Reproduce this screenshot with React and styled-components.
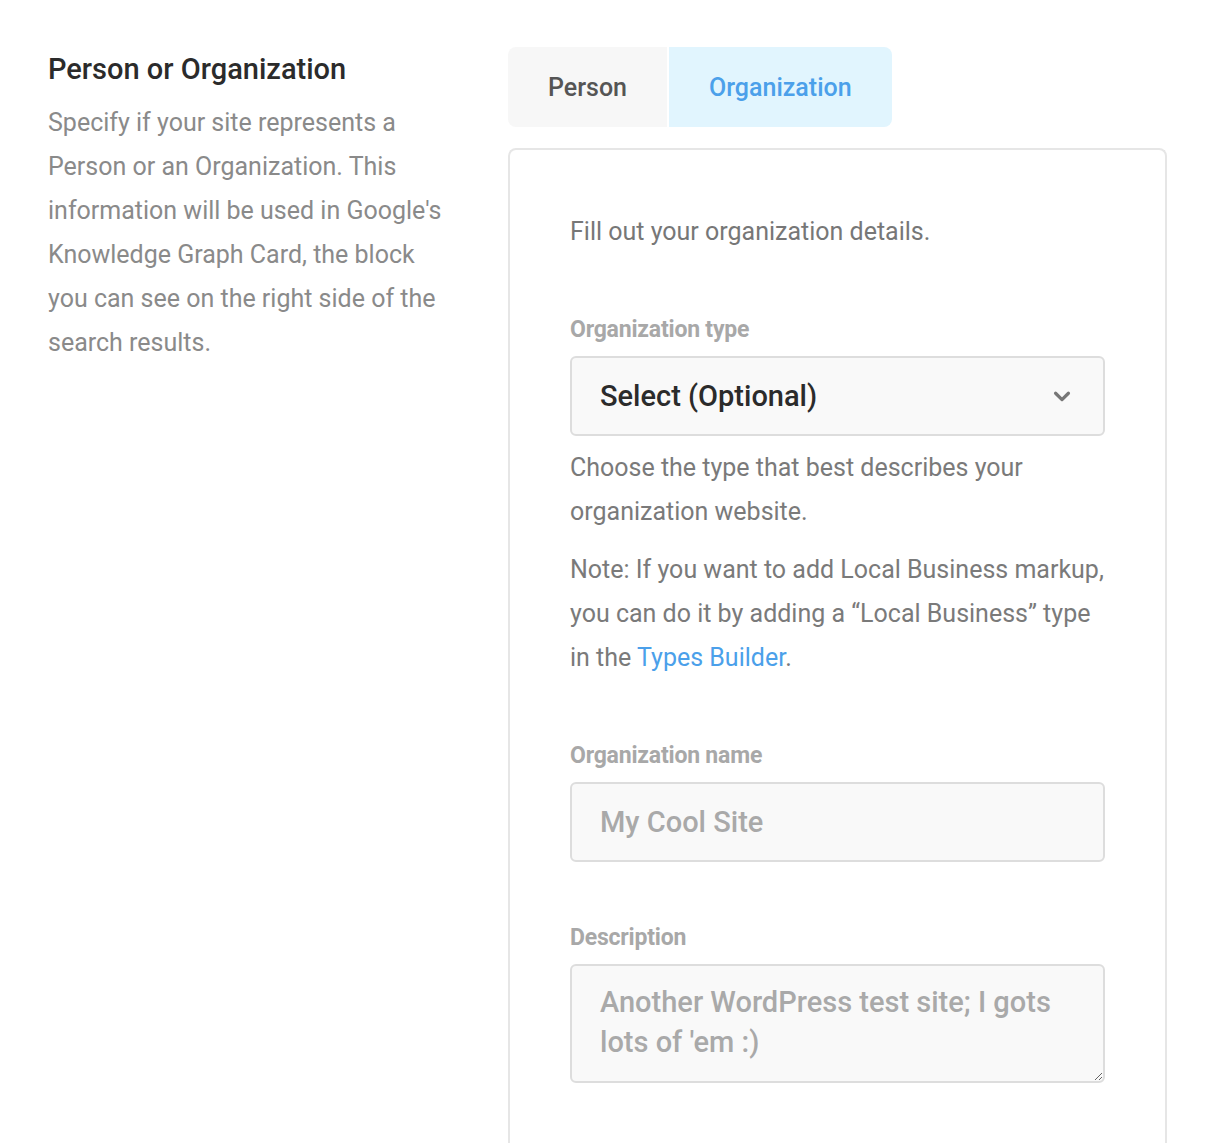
import React, { useState } from "react";
import styled, { createGlobalStyle } from "styled-components";

const GlobalStyle = createGlobalStyle`
  html, body {
    margin: 0;
    padding: 0;
    background: #ffffff;
    font-family: Roboto, "Liberation Sans", Arial, sans-serif;
  }
  * {
    box-sizing: border-box;
  }
`;

const Page = styled.div`
  display: flex;
  align-items: flex-start;
  padding: 47px 53px 0 48px;
  gap: 60px;
  height: 1143px;
  overflow: hidden;
`;

const Intro = styled.div`
  width: 400px;
  flex-shrink: 0;
`;

const Heading = styled.h2`
  margin: 0;
  padding-top: 5px;
  font-size: 29px;
  line-height: 34px;
  font-weight: 500;
  color: #2b2b2b;
`;

const IntroText = styled.p`
  margin: 15px 0 0;
  font-size: 25px;
  line-height: 44px;
  color: #8a8a8a;
`;

const Main = styled.div`
  flex: 1;
  display: flex;
  flex-direction: column;
  gap: 21px;
`;

const Tabs = styled.div`
  display: flex;
  gap: 2px;
`;

const Tab = styled.button`
  border: none;
  height: 80px;
  padding: 0 40px;
  font-family: inherit;
  font-size: 25px;
  font-weight: 500;
  cursor: pointer;
  background: ${(p) => (p.$active ? "#e1f5fe" : "#f7f7f7")};
  color: ${(p) => (p.$active ? "#4ba0ea" : "#555555")};
  border-radius: ${(p) => (p.$first ? "8px 0 0 8px" : "0 8px 8px 0")};
`;

const Card = styled.div`
  border: 2px solid #e6e6e6;
  border-bottom: none;
  border-radius: 8px 8px 0 0;
  padding: 60px 60px 80px 60px;
  min-height: 1000px;
`;

const Lead = styled.p`
  margin: 0;
  font-size: 25px;
  line-height: 44px;
  color: #777777;
`;

const Field = styled.div`
  margin-top: ${(p) => p.$top}px;
`;

const Label = styled.label`
  display: block;
  font-size: 23px;
  font-weight: 700;
  line-height: 30px;
  color: #a8a8a8;
  margin-bottom: 11px;
  letter-spacing: -0.2px;
`;

const SelectBox = styled.div`
  display: flex;
  align-items: center;
  justify-content: space-between;
  height: 80px;
  padding: 0 30px 0 28px;
  background: #f9f9f9;
  border: 2px solid #dddddd;
  border-radius: 6px;
  font-size: 29px;
  font-weight: 500;
  color: #2b2b2b;
`;

const Chevron = styled.svg`
  width: 22px;
  height: 22px;
  color: #777;
`;

const Input = styled.input`
  display: block;
  width: 100%;
  height: 80px;
  padding: 0 28px;
  background: #f9f9f9;
  border: 2px solid #dddddd;
  border-radius: 6px;
  font-family: inherit;
  font-size: 29px;
  font-weight: 500;
  color: #333;
  outline: none;
  &::placeholder {
    color: #a9a9a9;
  }
`;

const TextArea = styled.textarea`
  display: block;
  width: 100%;
  height: 119px;
  padding: 16px 28px;
  background: #f9f9f9;
  border: 2px solid #dddddd;
  border-radius: 6px;
  font-family: inherit;
  font-size: 29px;
  font-weight: 500;
  line-height: 40px;
  color: #333;
  outline: none;
  resize: vertical;
  &::placeholder {
    color: #a9a9a9;
  }
`;

const Help = styled.p`
  margin: ${(p) => p.$top}px 0 0;
  font-size: 25px;
  line-height: 44px;
  color: #7a7a7a;
`;

const Link = styled.a`
  color: #4ba0ea;
  text-decoration: none;
`;

export default function App() {
  const [tab, setTab] = useState("org");
  return (
    <>
      <GlobalStyle />
      <Page>
        <Intro>
          <Heading>Person or Organization</Heading>
          <IntroText>
            Specify if your site represents a Person or an Organization. This
            information will be used in Google's Knowledge Graph Card, the block
            you can see on the right side of the search results.
          </IntroText>
        </Intro>
        <Main>
          <Tabs>
            <Tab $first $active={tab === "person"} onClick={() => setTab("person")}>
              Person
            </Tab>
            <Tab $active={tab === "org"} onClick={() => setTab("org")}>
              Organization
            </Tab>
          </Tabs>
          <Card>
            <Lead>Fill out your organization details.</Lead>
            <Field $top={61}>
              <Label>Organization type</Label>
              <SelectBox>
                <span>Select (Optional)</span>
                <Chevron viewBox="0 0 24 24" fill="none" stroke="currentColor" strokeWidth="3.5" strokeLinecap="round" strokeLinejoin="round">
                  <path d="M5 9l7 7 7-7" />
                </Chevron>
              </SelectBox>
              <Help $top={10}>
                Choose the type that best describes your organization website.
              </Help>
              <Help $top={14}>
                Note: If you want to add Local Business markup, you can do it by
                adding a “Local Business” type in the <Link href="#">Types Builder</Link>.
              </Help>
            </Field>
            <Field $top={61}>
              <Label>Organization name</Label>
              <Input placeholder="My Cool Site" />
            </Field>
            <Field $top={61}>
              <Label>Description</Label>
              <TextArea placeholder="Another WordPress test site; I gots lots of 'em :)" />
            </Field>
          </Card>
        </Main>
      </Page>
    </>
  );
}
